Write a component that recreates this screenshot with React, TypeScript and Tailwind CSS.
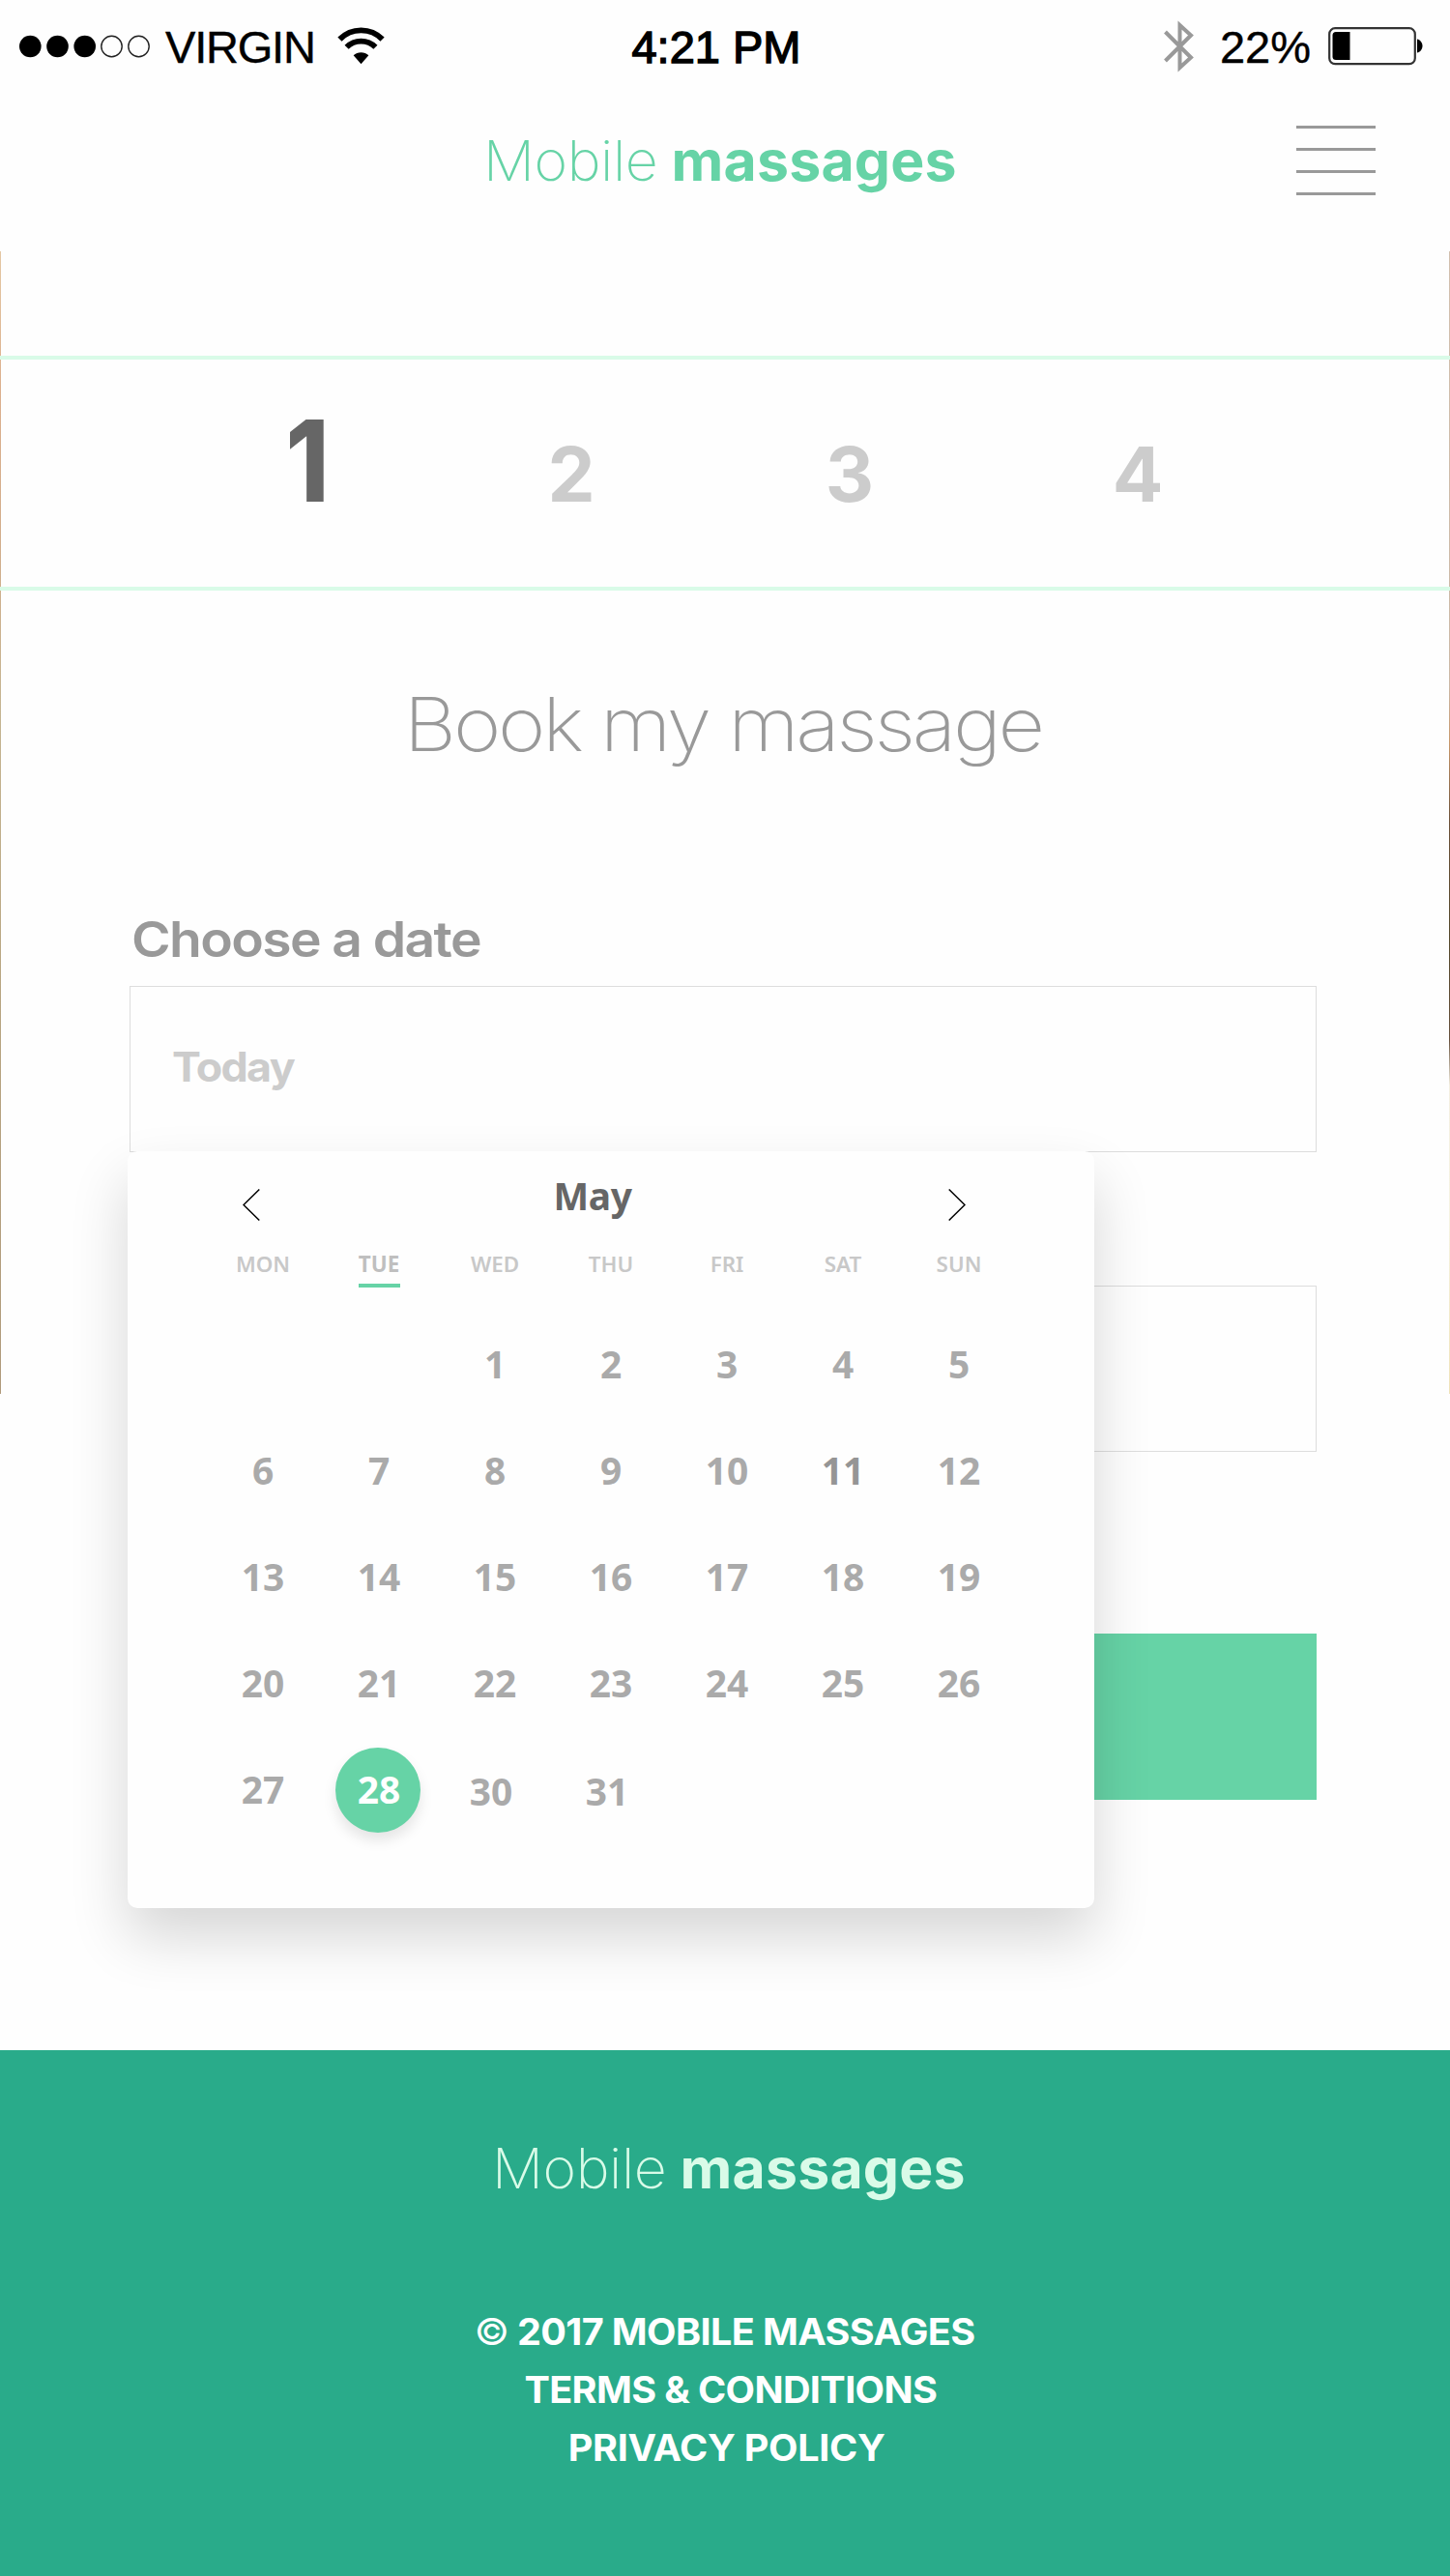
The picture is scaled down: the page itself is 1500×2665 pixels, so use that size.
import React from "react";

const WEEKDAYS = ["MON", "TUE", "WED", "THU", "FRI", "SAT", "SUN"];

type Day = { n: number; kind?: "selected" | "strong" | "shifted" };

const DAYS: (Day | null)[] = [
  null,
  null,
  ...Array.from({ length: 27 }, (_, i): Day => ({ n: i + 1, kind: i + 1 === 11 ? "strong" : undefined })),
  { n: 28, kind: "selected" },
  { n: 30, kind: "shifted" },
  { n: 31, kind: "shifted" },
];

function StatusBar() {
  return (
    <div className="grid h-24 grid-cols-[1fr_auto_1fr] items-center font-['Liberation_Sans',Arial,sans-serif] text-[47px] leading-none text-black">
      <div className="flex items-center pl-5">
        <svg width="136" height="26" viewBox="0 0 136 26">
          {[11.3, 39.5, 67.7].map((x) => (
            <circle key={x} cx={x} cy="13" r="11.3" fill="#000" />
          ))}
          {[95.5, 123.5].map((x) => (
            <circle key={x} cx={x} cy="13" r="10.7" fill="none" stroke="#222" strokeWidth="1.4" />
          ))}
        </svg>
        <span className="ml-[15px] tracking-[-1.2px] [-webkit-text-stroke:0.4px_#000]">VIRGIN</span>
        <svg className="ml-[23px]" width="49" height="40" viewBox="0 0 50 40">
          <path d="M2.5 12.5a31.5 31.5 0 0 1 45 0" fill="none" stroke="#000" strokeWidth="6" />
          <path d="M9.8 20.8a21.5 21.5 0 0 1 30.4 0" fill="none" stroke="#000" strokeWidth="6" />
          <path d="M25 38.5 17 29.5a11.5 11.5 0 0 1 16 0Z" fill="#000" />
        </svg>
      </div>
      <div className="pr-[18px] [-webkit-text-stroke:1.4px_#000]">4:21 PM</div>
      <div className="flex items-center justify-end pr-7">
        <svg width="31" height="54" viewBox="0 0 31 54" fill="none" stroke="#999" strokeWidth="4">
          <path d="M1.500 12 28 38.500 16.500 49V5L28 15.500 1.500 42" />
        </svg>
        <span className="ml-[27px] [-webkit-text-stroke:0.4px_#000]">22%</span>
        <svg className="ml-[18px]" width="98" height="40" viewBox="0 0 98 40">
          <rect x="1.2" y="1.2" width="88.6" height="37" rx="6" fill="none" stroke="#333" strokeWidth="2.2" />
          <path d="M8 5h14.500v29H8a3.500 3.500 0 0 1-3.500-3.500v-22A3.500 3.500 0 0 1 8 5Z" fill="#000" />
          <path d="M92 12.500c3 .5 5.500 3.500 5.500 7s-2.500 6.500-5.500 7Z" fill="#000" />
        </svg>
      </div>
    </div>
  );
}

function Logo() {
  return (
    <div className="flex scale-x-[1.025] items-baseline whitespace-nowrap text-[57.5px] leading-none">
      <span className="font-[150] tracking-[-0.4px]">Mobile</span>
      <span className="ml-[14px] font-bold tracking-[0.2px]">massages</span>
    </div>
  );
}

function Header() {
  return (
    <header className="grid h-[140px] grid-cols-[1fr_auto_1fr] items-center">
      <div />
      <div className="pt-px pr-[11px] text-[#66d3a6]">
        <Logo />
      </div>
      <button className="mr-[77px] flex w-[82px] flex-col gap-5 justify-self-end" aria-label="Menu">
        <span className="h-[3px] bg-[#999]" />
        <span className="h-[3px] bg-[#999]" />
        <span className="h-[3px] bg-[#999]" />
        <span className="h-[3px] bg-[#999]" />
      </button>
    </header>
  );
}

function Steps() {
  return (
    <nav className="relative flex h-[243px] items-baseline border-y-4 border-[#d9fbe8] pt-[46px] text-[78px] leading-[117px] font-bold text-[#ccc]">
      <span className="ml-[218px] w-[200px] scale-x-[0.87] text-center text-[117px] font-extrabold text-[#666]">1</span>
      <span className="ml-[73px] w-[200px] text-center">2</span>
      <span className="ml-[88px] w-[200px] text-center">3</span>
      <span className="ml-[98px] w-[200px] text-center">4</span>
    </nav>
  );
}

function DayCell({ day }: { day: Day | null }) {
  if (!day) return <div />;
  if (day.kind === "selected") {
    return (
      <div className="flex items-center justify-center pt-0.5 pr-0.5">
        <div className="flex size-[88px] items-center justify-center rounded-full bg-[#66d3a6] pb-0.5 pl-0.5 text-white shadow-[0_8px_14px_rgba(0,0,0,0.1)]">
          {day.n}
        </div>
      </div>
    );
  }
  if (day.kind === "shifted") {
    return <div className="flex items-center justify-center pt-1 pr-2">{day.n}</div>;
  }
  if (day.kind === "strong") {
    return <div className="flex items-center justify-center text-[#959595]">{day.n}</div>;
  }
  return <div className="flex items-center justify-center">{day.n}</div>;
}

function Calendar() {
  return (
    <div className="absolute top-[170px] -left-[3px] h-[783px] w-[1000px] rounded-[10px] bg-[#fefefe] px-20 pt-[25px] font-['Noto_Sans',sans-serif] font-semibold shadow-[0_30px_60px_rgba(0,0,0,0.16)]">
      <div className="flex h-10 justify-between pr-[53px] pl-[39px]">
        <svg className="mt-[14px]" width="18" height="33" viewBox="0 0 18 33" fill="none" stroke="#000" strokeWidth="1.5">
          <path d="M17.300 0.500 1 16.500l16.300 16" />
        </svg>
        <span className="-ml-[24px] pt-px text-[38.9px] leading-10 font-bold tracking-[-0.4px] text-[#666]">May</span>
        <svg className="mt-[14px]" width="18" height="33" viewBox="0 0 18 33" fill="none" stroke="#000" strokeWidth="1.5">
          <path d="M0.700 0.500 17 16.500 0.700 32.500" />
        </svg>
      </div>
      <div className="mt-10 grid grid-cols-7 text-[22.4px] leading-6 text-[#c8c8c8]">
        {WEEKDAYS.map((d) =>
          d === "TUE" ? (
            <div key={d} className="flex flex-col items-center font-bold text-[#bfbfbf]">
              {d}
              <span className="mt-2 h-1 w-[43px] bg-[#66d3a6]" />
            </div>
          ) : (
            <div key={d} className="text-center">
              {d}
            </div>
          ),
        )}
      </div>
      <div className="mt-6 grid auto-rows-[110px] grid-cols-7 text-[38.9px] leading-none font-[680] text-[#aaa]">
        {DAYS.map((day, i) => (
          <DayCell key={i} day={day} />
        ))}
      </div>
    </div>
  );
}

function BookingForm() {
  return (
    <main className="h-[1510px] pt-[100px]">
      <h1 className="flex h-[76px] scale-x-[1.1] items-center justify-center pr-1 text-[76.7px] leading-[76px] font-extralight tracking-[-3px] text-[#999]">
        Book my massage
      </h1>
      <form className="mt-[159px] ml-[134px] w-[1228px]">
        <label className="ml-[2px] block origin-left scale-x-[1.09] text-[50.7px] leading-[52px] font-[570] tracking-[-1.5px] text-[#999]">
          Choose a date
        </label>
        <div className="relative z-10 mt-[22px] flex h-[172px] items-center border border-[#ddd] pb-1 pl-[43px] text-[42.5px] font-[650] text-[#ccc]">
          <span className="origin-left scale-x-[1.055] tracking-[-1.6px]">Today</span>
          <Calendar />
        </div>
        <div className="mt-[138px] h-[172px] border border-[#ddd]" />
        <div className="mt-[188px] h-[172px] bg-[#66d3a6]" />
      </form>
    </main>
  );
}

function Footer() {
  return (
    <footer className="flex h-[544px] flex-col items-center bg-[#29ab8a]">
      <div className="mt-[94px] pl-[7px] text-[#d9fbe8]">
        <Logo />
      </div>
      <div className="mt-[109px] flex scale-x-[1.05] flex-col items-center text-[37.7px] leading-[60px] font-bold tracking-[-0.6px] text-white">
        <p>
          <span className="font-normal">©</span> 2017 MOBILE MASSAGES
        </p>
        <p className="pl-3">TERMS &amp; CONDITIONS</p>
        <p className="pl-1 tracking-[-0.3px]">PRIVACY POLICY</p>
      </div>
    </footer>
  );
}

export default function App() {
  return (
    <div className="w-[1500px] bg-[#fefefe] font-['Inter',sans-serif]">
      <StatusBar />
      <Header />
      <div className="relative pt-[132px]">
        <div className="absolute top-6 left-0 h-[1182px] w-px bg-[linear-gradient(#e4c8a4,#dcb08e_12%,#d3ae8c_25%,#c6b592_40%,#b8a682_65%,#b09a7c)]" />
        <div className="absolute top-6 right-0 h-[1182px] w-px bg-[linear-gradient(#d2bfae,#ccb8a6_38%,#c8976a_43%,#6b5038_50%,#55482c_60%,#66503c_69%,#f4efe0_73%,#f6f4e2_85%,#f0e2b8)]" />
        <Steps />
        <BookingForm />
      </div>
      <Footer />
    </div>
  );
}
